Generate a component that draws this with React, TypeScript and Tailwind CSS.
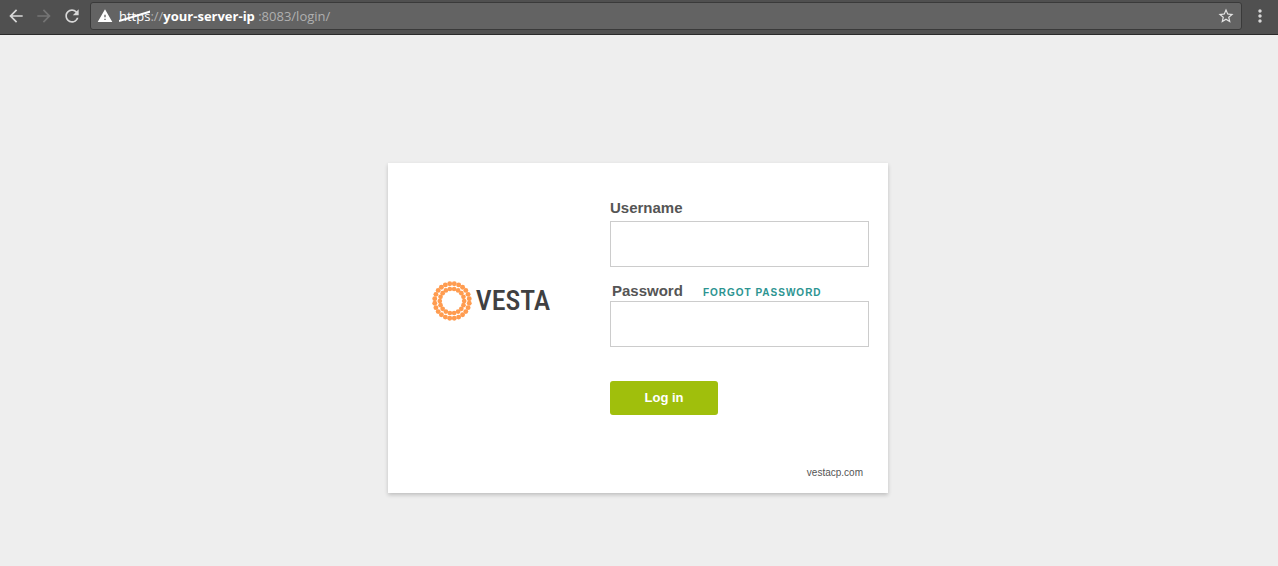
import { MdArrowBack, MdArrowForward, MdRefresh, MdWarning, MdStarBorder, MdMoreVert } from "react-icons/md";

const ring = (count: number, radius: number, dot: number, phase: number) =>
  Array.from({ length: count }, (_, i) => {
    const a = ((i + phase) / count) * Math.PI * 2;
    return (
      <circle key={`${radius}-${i}`} cx={20 + radius * Math.cos(a)} cy={20 + radius * Math.sin(a)} r={dot} />
    );
  });

function BrowserBar() {
  return (
    <header className="flex h-[35px] items-center border-b border-[#2a2a2a] bg-[#505050] pr-2 pb-0.5 pl-1.5 text-[#d8d8d8]">
      <nav className="flex shrink-0 items-center gap-2" aria-label="Browser">
        <button type="button" aria-label="Back"><MdArrowBack size={20} /></button>
        <button type="button" aria-label="Forward" className="text-[#747474]" disabled><MdArrowForward size={20} /></button>
        <button type="button" aria-label="Reload"><MdRefresh size={20} /></button>
      </nav>
      <div className="mr-2 ml-2 flex h-7 min-w-0 flex-1 items-center rounded-[3px] border border-[#3a3a3a] bg-[#636363] px-1.5 font-['Open_Sans',sans-serif] text-[13px] leading-5 text-[#b0b0b0]">
        <MdWarning size={16} className="mr-1.5 shrink-0 text-white" />
        <div role="textbox" aria-label="Address" contentEditable suppressContentEditableWarning className="min-w-0 flex-1 whitespace-nowrap outline-none">
          <span className="relative text-white">
            https
            <svg className="absolute inset-0 h-full w-full" viewBox="0 0 32 18" preserveAspectRatio="none" aria-hidden="true">
              <path d="M0 14L32 4.5" stroke="white" strokeWidth="2" />
            </svg>
          </span>
          ://<b className="font-bold text-white">your-server-ip</b> :8083/login/
        </div>
        <button type="button" aria-label="Bookmark this page" className="shrink-0 text-[#e4e4e4]"><MdStarBorder size={18} /></button>
      </div>
      <button type="button" aria-label="Menu" className="shrink-0"><MdMoreVert size={20} /></button>
    </header>
  );
}

function Logo() {
  return (
    <a href="#vesta" aria-label="Vesta" className="flex items-center gap-1 text-[#404041]">
      <svg className="h-10 w-10" viewBox="0 0 40 40" fill="#ff9c50" aria-hidden="true">
        {ring(24, 17.4, 2.45, 0.5)}
        {ring(18, 12.2, 2.35, 0)}
      </svg>
      <span className="font-['Roboto_Condensed','Liberation_Sans_Narrow',sans-serif] text-[28px] leading-10 font-medium">VESTA</span>
    </a>
  );
}

export default function App() {
  return (
    <div className="flex min-h-screen flex-col bg-[#eeeeee] font-['Liberation_Sans',Arial,sans-serif]">
      <BrowserBar />
      <main className="flex flex-1 items-start justify-center pt-32 pr-[18px] pb-8 pl-4">
        <section className="flex w-full max-w-[500px] bg-white shadow-[0_2px_4px_rgba(0,0,0,0.2)]">
          <div className="flex w-[222px] shrink-0 items-start justify-center pt-[118px] pr-4">
            <Logo />
          </div>
          <form className="flex min-w-0 flex-1 flex-col pt-9 pr-[19px] pb-[13px]" onSubmit={(e) => e.preventDefault()}>
            <label htmlFor="username" className="text-[15px] leading-[18px] font-bold text-[#555]">Username</label>
            <input id="username" type="text" className="mt-1 h-[46px] w-full border border-[#ccc] px-3 outline-none" />
            <div className="mt-[15px] mb-px flex items-baseline gap-5 pl-0.5">
              <label htmlFor="password" className="text-[15px] leading-[18px] font-bold text-[#555]">Password</label>
              <a href="#forgot" className="text-[10px] leading-[14px] font-bold tracking-widest text-[#2c9491] uppercase">FORGOT PASSWORD</a>
            </div>
            <input id="password" type="password" className="h-[46px] w-full border border-[#ccc] px-3 outline-none" />
            <button type="submit" className="mt-[34px] h-[34px] w-[108px] rounded-[3px] bg-[#a0bf0c] text-[13px] font-bold text-white">Log in</button>
            <a href="#vestacp" className="mt-[51px] mr-1.5 self-end text-[10px] leading-[14px] text-[#555]">vestacp.com</a>
          </form>
        </section>
      </main>
    </div>
  );
}
